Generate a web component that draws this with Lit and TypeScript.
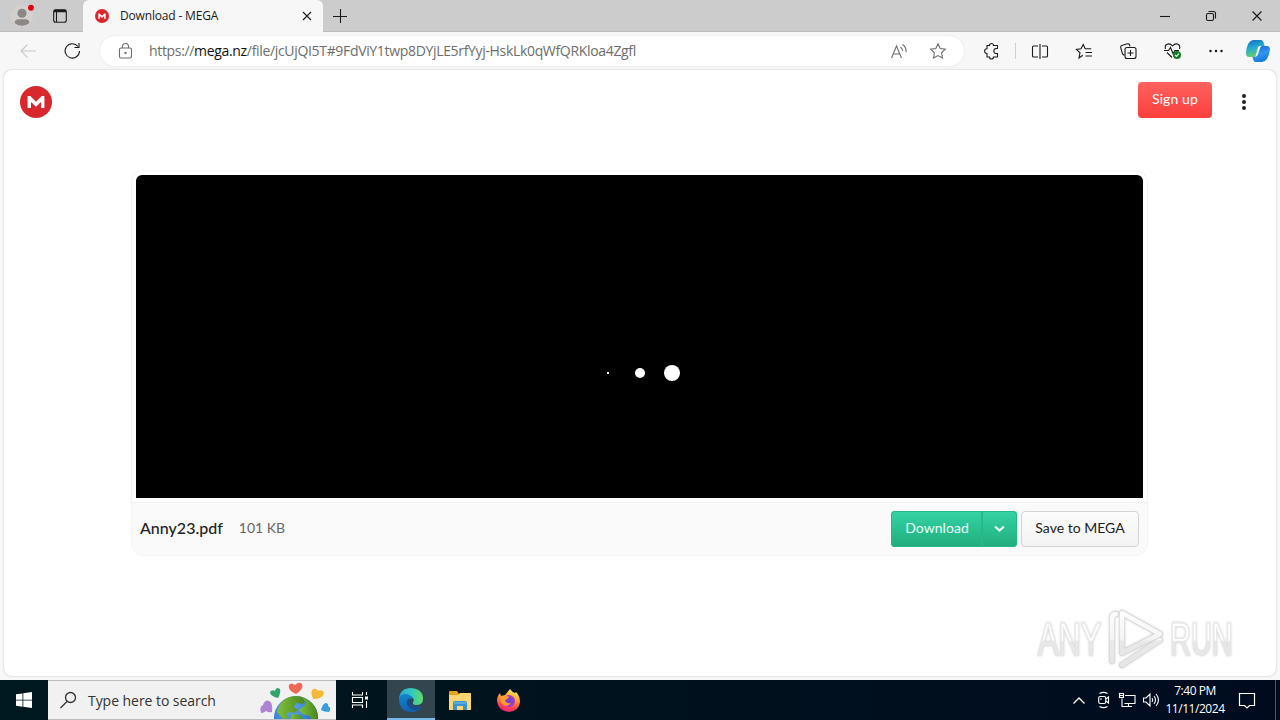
import { LitElement, css, html, svg } from "lit";
import { customElement, property } from "lit/decorators.js";

const megaMark = svg`
  <circle cx="16" cy="16" r="16" fill="#d9272e" />
  <path d="M7.600 22V10h2.700L16 15.700 21.700 10h2.700v12H21v-6L16 20.800 11 16v6z" fill="#fff" />
`;

const icons: Record<string, unknown> = {
  mega: megaMark,
  profile: svg`
    <circle cx="12" cy="12" r="12" fill="#d4d0ce" />
    <circle cx="12" cy="9" r="5" fill="#8b8785" />
    <path d="M4 19.500q0-4 4.500-4h7q4.500 0 4.500 4-3 3-8 3t-8-3z" fill="#8b8785" />
    <circle cx="21.800" cy="3" r="3.200" fill="#e3000f" />
  `,
  tabs: svg`<rect x=".7" y=".7" width="12.600" height="12.600" rx="2" /><path d="M1 2h12" stroke-width="2.500" /><path d="M3.500 2v11" />`,
  close: svg`<path d="M1 1l8 8M9 1l-8 8" />`,
  plus: svg`<path d="M7.500 0v14M0 7.500h14" />`,
  minimize: svg`<path d="M0 5.500h10" />`,
  restore: svg`<rect x=".5" y="2.500" width="7" height="7" rx="1.500" /><path d="M2.500.5h5q2 0 2 2v5" />`,
  back: svg`<path d="M7.500.5L1 7l6.500 6.500M1 7h15" />`,
  reload: svg`<path d="M14 3.500A7.200 7.200 0 1 0 15.500 8M15 0v4.500h-4.500" />`,
  lock: svg`<rect x=".5" y="5" width="12" height="10" rx="1.500" /><path d="M3.500 5V3.500a3 3 0 0 1 6 0V5" /><circle cx="6.500" cy="10" r=".6" fill="currentColor" />`,
  read: svg`<path d="M.5 14L5.500 2l5 12M2.200 10h6.600M9.500 3q2 1.500 2 4M11.500.5q4 2.500 3.500 7.500" />`,
  star: svg`<path d="M8 .8l2.200 4.700 5.100.7-3.700 3.600.9 5.100L8 12.500l-4.500 2.400.9-5.100L.7 6.200l5.100-.7z" />`,
  puzzle: svg`<path d="M3 2.500h2.500a2 2 0 0 1 4 0H13.500V5.500h-1.200a2.500 2.500 0 0 0 0 5h1.200v3.500H9.500a2 2 0 1 1-4 0H3V10.500a2.400 2.400 0 0 1 0-4.800z" />`,
  split: svg`<path d="M6 2H1.500q-1 0-1 1v9q0 1 1 1H6M8 0v15M10 2h4.500q1 0 1 1v9q0 1-1 1H10" />`,
  favorites: svg`<path d="M6.800 11.300L3 14l1-5.200L.4 5.400l4.600-.6L7.200.5l2 4.300h6M9.500 8.500H16M9.500 12H16" />`,
  collections: svg`<path d="M4.500 12.500L2.500 11 .7 4.500q-.3-1.500 1-2L7.500.8q1.500-.3 2 1l.4 1.500" /><rect x="5" y="4.500" width="11" height="11" rx="2" /><path d="M10.500 7v6M7.500 10h6" />`,
  essentials: svg`
    <path d="M1.500 6Q.5 2.500 3 1.300 6 0 8.500 3 11 0 14 1.300 16.500 2.500 15.500 6M0 7.500h4.500l2-3 2.500 6 2-3h4M3 9.500l5 5" />
    <circle cx="13" cy="12" r="4" fill="#118020" stroke="none" /><path d="M11 12l1.500 1.400 2.500-2.900" stroke="#fff" />
  `,
  more: svg`<g fill="currentColor" stroke="none"><circle cx="1.500" cy="2" r="1.250" /><circle cx="7" cy="2" r="1.250" /><circle cx="12.500" cy="2" r="1.250" /></g>`,
  copilot: svg`
    <defs>
      <linearGradient id="cpa" x1="0" y1="0" x2=".3" y2="1"><stop stop-color="#1167bd" /><stop offset=".5" stop-color="#20a9d2" /><stop offset="1" stop-color="#68ce6b" /></linearGradient>
      <linearGradient id="cpb" x1=".2" y1="0" x2=".5" y2="1"><stop stop-color="#1d62d8" /><stop offset=".5" stop-color="#3195f4" /><stop offset="1" stop-color="#137bdd" /></linearGradient>
    </defs>
    <path d="M7 0h8q2 0 3 4l.5 2q-3-.5-4.500 3l-2 5q-1 3-4 3H3q-3 0-3-4Q1 1 7 0z" fill="url(#cpa)" />
    <path d="M16 6h5q3 0 3 3.500Q22 22 16 22H9q-2-1-2.500-5 4.500 0 5.500-3l2-5q.7-3 2-3z" fill="url(#cpb)" />
    <path d="M13 6h2.500q-1.500 1-2.200 3.500L12 14q-.8 2.500-3 3 1-1.500 1.500-4l1-4q.5-2.500 1.500-3z" fill="#fff" />
  `,
  kebab: svg`<g fill="#222"><circle cx="2" cy="2" r="2" /><circle cx="2" cy="8" r="2" /><circle cx="2" cy="14" r="2" /></g>`,
  chevron: svg`<path d="M1 1.500l4.500 4 4.500-4" stroke-width="2.200" />`,
  dots: svg`<g fill="#fff"><rect x="1" y="8" width="2" height="2" /><circle cx="34" cy="9" r="5" /><circle cx="66" cy="9" r="8" /></g>`,
  windows: svg`<path d="M0 2.300L6.500 1.400V7.700H0zM7.300 1.300L16 0v7.700H7.300zM0 8.500h6.500v6.200L0 13.800zM7.300 8.500H16V16l-8.700-1.200z" fill="#fff" />`,
  search: svg`<circle cx="10.500" cy="5.500" r="5" stroke-width="1.300" /><path d="M7 9.500L.5 16" stroke-width="1.300" />`,
  earth: svg`
    <defs>
      <radialGradient id="sea" cx=".35" cy=".25" r=".8"><stop stop-color="#66aaf0" /><stop offset=".6" stop-color="#347bd0" /><stop offset="1" stop-color="#1656a9" /></radialGradient>
      <linearGradient id="land"><stop stop-color="#80bf3b" /><stop offset="1" stop-color="#46861e" /></linearGradient>
      <clipPath id="globe"><circle cx="35" cy="37" r="22" /></clipPath>
    </defs>
    <circle cx="35" cy="37" r="22" fill="url(#sea)" />
    <g clip-path="url(#globe)" fill="url(#land)">
      <path d="M18 26q4-12 20-12l7 4-3 5-7-1-2 4 4 3-4 3-5-1-3 3 4 3-7 1-6-7z" />
      <path d="M42 17q11 3 15 14l-1 10h-5l-2-6-8-2-3-4 5-4 2-3z" />
      <path d="M31 33l8 1 5 6H29z" />
    </g>
    <path d="M35 13q-9-4-7-9 2-3 6 0 4-4 7-1 2 5-6 10z" fill="#ed6856" />
    <path d="M17 17q-8-2-8-6 2-3 5-1 1-5 5-2 1 4-2 9z" fill="#32a369" />
    <path d="M52 18q-3-8 0-10 4-1 5 2 5-2 6 2-1 6-11 6z" fill="#f4ba36" />
    <path d="M0 32q-2-6 2-8 2-6 6-4 4 1 3 11-3 1-6-1-2 2-5 2z" fill="#ae83d4" />
    <path d="M60 29q2-7 5-7 3 1 2 3 4 2 1 6-5 0-8-2z" fill="#3a9bdc" />
  `,
  taskview: svg`<path d="M1.500 0v3h10V0M1.500 16v-3h10v3M1.500 5.500h10v5h-10zM15.500 0v3M15.500 9v7" /><rect x="14" y="4.500" width="3" height="3" fill="#fff" stroke="none" />`,
  edge: svg`
    <defs>
      <linearGradient id="ega" x1="0" x2="1"><stop stop-color="#2ba9df" /><stop offset=".55" stop-color="#34c9bc" /><stop offset="1" stop-color="#63dd65" /></linearGradient>
      <linearGradient id="egb" x1="0" y1="0" x2=".3" y2="1"><stop stop-color="#1189d2" /><stop offset="1" stop-color="#125faf" /></linearGradient>
    </defs>
    <path d="M0 11Q1 0 12 0q12 1 12 11 0 6-7 6-4 0-3-3 2-2-1-5-5-4-13 2z" fill="url(#ega)" />
    <path d="M0 12q0-6 6-6 6 0 8 5-4-2-4 3 1 6 8 6 3 0 5-2-3 6-11 6Q1 24 0 12z" fill="url(#egb)" />
    <path d="M10 10q-4 4-1 8 4 5 9 4 3-1 5-4-5 2-9 0-4-3-4-8z" fill="#164e8d" />
  `,
  folder: svg`
    <path d="M0 1q0-1 1-1h7l2 3h11v15H0z" fill="#e8a31d" /><path d="M0 4h9l2-2h11v17H0z" fill="#fbd673" />
    <path d="M4 19v-7q0-2 2-2h10q2 0 2 2v7h-4v-4H8v4z" fill="#3a93d0" /><path d="M5 12h12" stroke="#77c2e8" />
  `,
  firefox: svg`
    <defs>
      <linearGradient id="ffa" x1=".7" y1="0" x2=".4" y2="1"><stop stop-color="#ffed4f" /><stop offset=".45" stop-color="#ff982e" /><stop offset=".75" stop-color="#ff4252" /><stop offset="1" stop-color="#e72378" /></linearGradient>
      <radialGradient id="ffb"><stop stop-color="#6543cc" /><stop offset="1" stop-color="#aa3dca" /></radialGradient>
    </defs>
    <path d="M3 4l1 3 4-1 5-6q2 3 5 4l1-1q4 4 4 10-1 9-11 10Q1 22 0 12q0-5 3-8z" fill="url(#ffa)" />
    <circle cx="12" cy="12" r="6" fill="url(#ffb)" /><path d="M4 9q4-4 8-1-1 2-4 3 1 4 6 3-4 5-9 1-3-3-1-6z" fill="#ff9b2f" />
  `,
  up: svg`<path d="M.5 6.500L6 1l5.500 5.500" stroke-width="1.300" />`,
  meet: svg`<rect x=".7" y="4.500" width="7" height="7" rx="1.500" /><path d="M8 7l2.500-2v6L8 9M1.500 1.500Q5.500-.8 9.500 1.500M1.500 14.500q4 2.300 8 0" /><circle cx="3" cy="7" r=".3" />`,
  network: svg`<path d="M6 2.500h10v8H5.500M9.500 10.500v3M6 13.500h7M3 5.500v8h3" /><rect x=".5" y=".5" width="4" height="4" /><path d="M1 2.500h3" />`,
  volume: svg`<path d="M.5 5h2.500l4-4v12l-4-4H.5zM9 5q1.500 2 0 4M11 3q3 4 0 8M13 1q5 6 0 12" />`,
  notice: svg`<path d="M.5.5h15v12h-5L8 15l-2.500-2.500h-5z" stroke-width="1.200" />`,
  play: svg`
    <defs>
      <linearGradient id="pl" x1="0" y1="0" x2="0" y2="1"><stop stop-color="#fdfdfd" /><stop offset=".5" stop-color="#f4f4f4" /><stop offset=".55" stop-color="#e8e8e8" /><stop offset="1" stop-color="#e6e6e6" /></linearGradient>
    </defs>
    <g fill="none" stroke="#d8d8d8" stroke-linejoin="round" stroke-linecap="round">
      <path d="M8 7q-4 0-4 5v42M14 6v40l38-19zM14 58l38-25" stroke-width="6" />
      <path d="M8 7q-4 0-4 5v42M14 6v40l38-19zM14 58l38-25" stroke="url(#pl)" stroke-width="4.500" />
    </g>
  `,
};

@customElement("ui-icon")
class UiIcon extends LitElement {
  @property() name = "";
  @property({ type: Number }) w = 16;
  @property({ type: Number }) h = 16;
  @property() box = "";

  render() {
    return html`<svg width=${this.w} height=${this.h} viewBox=${this.box || `0 0 ${this.w} ${this.h}`}>
      ${icons[this.name]}
    </svg>`;
  }

  static get styles() {
    return css`
      :host {
        display: flex;
        align-items: center;
        justify-content: center;
        flex: none;
      }

      svg {
        display: block;
        overflow: visible;
        fill: none;
      }

      :host(.line) svg {
        stroke: currentColor;
        stroke-width: 1.1;
      }
    `;
  }
}

@customElement("browser-chrome")
class BrowserChrome extends LitElement {
  render() {
    return html`
      <div class="tabs">
        <div class="lead">
          <ui-icon class="profile" name="profile" w="22" h="22" box="0 0 24 24"></ui-icon>
          <ui-icon class="line" name="tabs" w="14" h="14"></ui-icon>
        </div>
        <div class="tab">
          <ui-icon name="mega" w="14" h="14" box="0 0 32 32"></ui-icon>
          <span class="title">Download - MEGA</span>
          <ui-icon class="line" name="close" w="10" h="10"></ui-icon>
        </div>
        <ui-icon class="line new" name="plus" w="14" h="14"></ui-icon>
        <div class="window">
          <ui-icon class="line" name="minimize" w="10" h="10"></ui-icon>
          <ui-icon class="line" name="restore" w="10" h="10"></ui-icon>
          <ui-icon class="line" name="close" w="10" h="10" box="0.5 0.5 9 9"></ui-icon>
        </div>
      </div>
      <div class="toolbar">
        <ui-icon class="line tool back" name="back" w="16" h="14"></ui-icon>
        <ui-icon class="line tool" name="reload" w="16" h="16"></ui-icon>
        <div class="address">
          <ui-icon class="line lock" name="lock" w="13" h="16"></ui-icon>
          <span class="url">https://<b>mega.nz</b>/file/jcUjQI5T#9FdViY1twp8DYjLE5rfYyj-HskLk0qWfQRKloa4Zgfl</span>
          <ui-icon class="line action" name="read" w="16" h="15"></ui-icon>
          <ui-icon class="line action" name="star" w="16" h="16"></ui-icon>
        </div>
        <ui-icon class="line puzzle" name="puzzle" w="16" h="16"></ui-icon>
        <div class="rule"></div>
        <ui-icon class="line tool split" name="split" w="16" h="15"></ui-icon>
        <ui-icon class="line tool" name="favorites" w="16" h="15"></ui-icon>
        <ui-icon class="line tool" name="collections" w="16" h="16"></ui-icon>
        <ui-icon class="line tool" name="essentials" w="17" h="16"></ui-icon>
        <ui-icon class="tool" name="more" w="14" h="4"></ui-icon>
        <ui-icon class="copilot" name="copilot" w="24" h="22"></ui-icon>
      </div>
    `;
  }

  static get styles() {
    return css`
      :host {
        display: block;
        font-family: "Open Sans", "Noto Sans", sans-serif;
        color: #1b1b1b;
      }

      .tabs {
        height: 32px;
        display: flex;
        background: #cccccc;
        box-shadow: inset 0 -1px #bcbcbc;
      }

      .lead {
        width: 83px;
        box-sizing: border-box;
        padding-left: 11px;
        display: flex;
        align-items: center;
        gap: 20px;
      }

      .tab {
        width: 240px;
        box-sizing: border-box;
        padding: 0 11px 0 12px;
        display: flex;
        align-items: center;
        background: #f7f7f7;
        border-radius: 6px 6px 0 0;
      }

      .title {
        flex: 1;
        padding: 0 0 1px 11px;
        font-size: 12px;
        letter-spacing: -0.17px;
        white-space: nowrap;
      }

      .new {
        width: 34px;
      }

      .window {
        margin-left: auto;
        display: flex;
      }

      .window ui-icon {
        width: 46px;
      }

      .toolbar {
        height: 38px;
        display: flex;
        align-items: center;
        background: #f7f7f7;
        padding-left: 6px;
      }

      .tool {
        width: 44px;
      }

      .back {
        color: #c8c8c8;
      }

      .address {
        width: 864px;
        height: 30px;
        box-sizing: border-box;
        margin-left: 6px;
        padding: 0 7px 0 19px;
        border-radius: 15px;
        background: #fff;
        box-shadow: 0 0 2px #dedede;
        display: flex;
        align-items: center;
        color: #6d6d6d;
      }

      .url {
        flex: 1;
        padding: 0 0 1px 17px;
        font-size: 14px;
        letter-spacing: -0.33px;
        white-space: nowrap;
      }

      .url b {
        font-weight: 400;
        color: #111;
      }

      .action {
        width: 39px;
      }

      .puzzle {
        width: 44px;
        margin-left: 6px;
      }

      .rule {
        width: 1px;
        height: 16px;
        margin-left: 1px;
        background: #cfcfcf;
      }

      .split {
        margin-left: 2px;
      }

      .copilot {
        margin-left: 8px;
      }
    `;
  }
}

@customElement("mega-page")
class MegaPage extends LitElement {
  render() {
    return html`
      <header>
        <ui-icon name="mega" w="32" h="32"></ui-icon>
        <button class="signup">Sign up</button>
        <ui-icon name="kebab" w="4" h="16"></ui-icon>
      </header>
      <section class="viewer">
        <div class="preview">
          <ui-icon name="dots" w="74" h="18"></ui-icon>
        </div>
        <footer>
          <span class="file">Anny23.pdf</span>
          <span class="size">101 KB</span>
          <div class="download">
            <button class="get">Download</button>
            <button class="menu"><ui-icon class="line" name="chevron" w="11" h="7"></ui-icon></button>
          </div>
          <button class="save">Save to MEGA</button>
        </footer>
      </section>
      <div class="watermark">
        <span class="any">ANY</span>
        <ui-icon name="play" w="56" h="64"></ui-icon>
        <span class="run">RUN</span>
      </div>
    `;
  }

  static get styles() {
    return css`
      :host {
        display: block;
        position: relative;
        box-sizing: border-box;
        background: #fff;
        border-radius: 8px;
        box-shadow: 0 0 2px #b8b8b8;
        font-family: Lato, sans-serif;
        color: #222;
      }

      header {
        height: 64px;
        box-sizing: border-box;
        display: flex;
        align-items: center;
        padding: 0 30px 0 16px;
      }

      button {
        height: 36px;
        box-sizing: border-box;
        padding: 0 0 2px;
        border: none;
        border-radius: 4px;
        font: 14px Lato, sans-serif;
        letter-spacing: 0.1px;
        white-space: nowrap;
      }

      .signup {
        width: 74px;
        margin: -4px 30px 0 auto;
        color: #fff;
        background: linear-gradient(#ff625f, #fb3f3c);
        padding-bottom: 3px;
      }

      .viewer {
        width: 1017px;
        height: 386px;
        box-sizing: border-box;
        margin: 36px 0 0 127px;
        padding: 4px;
        border: 1px solid #f4f4f4;
        border-radius: 12px;
        background: #fff;
        overflow: hidden;
      }

      .preview {
        width: 1007px;
        height: 323px;
        box-sizing: border-box;
        border-radius: 6px 6px 0 0;
        background: #000;
        display: flex;
        justify-content: center;
        padding: 189px 0 0 7px;
        align-items: flex-start;
      }

      footer {
        height: 53px;
        box-sizing: border-box;
        margin: 4px -4px 0;
        padding: 0 8px 1px;
        background: #fafafa;
        border-top: 1px solid #f0f0f0;
        display: flex;
        align-items: center;
      }

      .file {
        padding-bottom: 2px;
        font-size: 16px;
        font-weight: 500;
      }

      .size {
        padding: 0 0 2px 16px;
        font-size: 14px;
        color: #666;
      }

      .download {
        width: 126px;
        margin: 0 4px 0 auto;
        display: flex;
      }

      .get,
      .menu {
        color: #e9fff8;
        background: linear-gradient(#35d3a6, #20ad7b);
        box-shadow: inset 0 0 0 1px #26b985;
      }

      .get {
        width: 91px;
        padding-left: 1px;
        letter-spacing: 0.05px;
        border-radius: 4px 0 0 4px;
      }

      .menu {
        width: 35px;
        padding-bottom: 0;
        border-radius: 0 4px 4px 0;
      }

      .save {
        width: 118px;
        color: #222;
        border: 1px solid #d3d3d3;
        background: linear-gradient(#fcfcfc, #f3f3f3);
        letter-spacing: 0;
      }

      .watermark {
        position: absolute;
        right: 42px;
        bottom: 4px;
        width: 196px;
        height: 66px;
        display: flex;
        align-items: center;
        justify-content: space-between;
        filter: drop-shadow(0 0 1px #ccc);
      }

      .watermark span {
        width: 64px;
        font: 46px/60px "Liberation Sans", sans-serif;
        color: transparent;
        background: linear-gradient(#fff 52%, #e8e8e8 54%);
        background-clip: text;
        -webkit-text-stroke: 1px #e4e4e4;
        white-space: nowrap;
      }

      .watermark .any {
        width: 96px;
        margin-right: -32px;
        transform: scaleX(0.67);
        transform-origin: left;
      }

      .watermark .run {
        width: 100px;
        margin-right: -36px;
        transform: scaleX(0.63);
        transform-origin: left;
      }
    `;
  }
}

@customElement("task-bar")
class TaskBar extends LitElement {
  render() {
    return html`
      <ui-icon class="start" name="windows" w="16" h="16"></ui-icon>
      <div class="search">
        <ui-icon class="line" name="search" w="16" h="16"></ui-icon>
        <span>Type here to search</span>
        <ui-icon class="earth" name="earth" w="72" h="39"></ui-icon>
      </div>
      <ui-icon class="line app view" name="taskview" w="17" h="16"></ui-icon>
      <ui-icon class="app active" name="edge" w="24" h="24"></ui-icon>
      <ui-icon class="app" name="folder" w="22" h="19"></ui-icon>
      <ui-icon class="app" name="firefox" w="23" h="23"></ui-icon>
      <div class="tray">
        <ui-icon class="line" name="up" w="12" h="7"></ui-icon>
        <ui-icon class="line" name="meet" w="11" h="16"></ui-icon>
        <ui-icon class="line" name="network" w="16" h="14"></ui-icon>
        <ui-icon class="line" name="volume" w="16" h="14"></ui-icon>
        <div class="clock"><span>7:40 PM</span><span>11/11/2024</span></div>
        <ui-icon class="line notice" name="notice" w="16" h="15"></ui-icon>
        <div class="desktop"></div>
      </div>
    `;
  }

  static get styles() {
    return css`
      :host {
        display: flex;
        height: 40px;
        color: #fff;
        background: linear-gradient(90deg, #001820, #00121d 50%, #000b20);
        font-family: "Open Sans", "Noto Sans", sans-serif;
      }

      .start {
        width: 48px;
      }

      .search {
        width: 288px;
        box-sizing: border-box;
        padding: 0 3px 0 12px;
        display: flex;
        align-items: center;
        background: #f1f1f1;
        border: 1px solid #bdbdbd;
        border-width: 1px 0;
        color: #333;
        overflow: hidden;
      }

      .search span {
        flex: 1;
        padding-left: 12px;
        font-size: 14px;
        letter-spacing: -0.05px;
        white-space: nowrap;
      }

      .app {
        width: 49px;
      }

      .view {
        width: 51px;
        box-sizing: border-box;
        padding-right: 4px;
      }

      .active {
        width: 48px;
        background: #33464f;
        box-shadow: inset 0 -2px #76b9ed;
      }

      .tray {
        margin-left: auto;
        display: flex;
        align-items: center;
        padding-right: 4px;
      }

      .tray > ui-icon {
        width: 24px;
      }

      .clock {
        width: 64px;
        display: flex;
        flex-direction: column;
        align-items: center;
        font-size: 12px;
        line-height: 18px;
        letter-spacing: -0.45px;
        white-space: nowrap;
      }

      .clock span:first-child {
        margin-top: -1px;
      }

      .tray > .notice {
        width: 40px;
      }

      .desktop {
        width: 1px;
        height: 40px;
        margin-left: 8px;
        background: #4b5367;
      }
    `;
  }
}

@customElement("app-root")
class AppRoot extends LitElement {
  render() {
    return html`
      <browser-chrome></browser-chrome>
      <mega-page></mega-page>
      <task-bar></task-bar>
    `;
  }

  static get styles() {
    return css`
      :host {
        display: flex;
        flex-direction: column;
        width: 1280px;
        height: 720px;
        overflow: hidden;
        background: #f7f7f7;
      }

      mega-page {
        flex: 1;
        margin: 0 4px 4px;
      }
    `;
  }
}

declare global {
  interface HTMLElementTagNameMap {
    "app-root": AppRoot;
  }
}
